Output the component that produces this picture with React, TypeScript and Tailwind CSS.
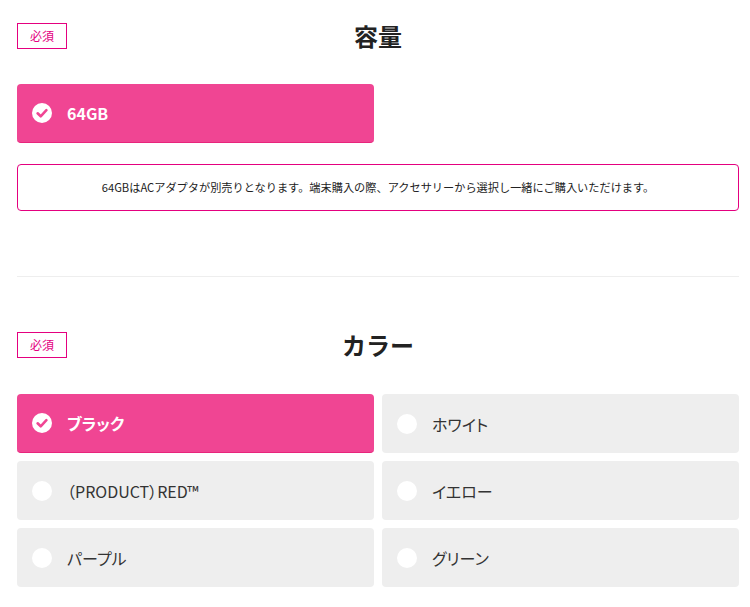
import { ReactNode } from "react";

const font = { fontFamily: '"Noto Sans CJK JP", "Noto Sans", sans-serif' };

function Badge() {
  return (
    <span className="absolute left-0 top-1/2 flex h-[26px] w-[50px] -translate-y-1/2 items-center justify-center border border-[#e4007f] text-[12px] leading-none text-[#e4007f]">
      必須
    </span>
  );
}

function Heading({ children }: { children: ReactNode }) {
  return (
    <div className="relative flex h-[26px] items-center justify-center">
      <Badge />
      <h2 className="text-[24px] font-bold leading-none text-[#222]">{children}</h2>
    </div>
  );
}

function CheckMark() {
  return (
    <svg width="20" height="20" viewBox="0 0 20 20" className="shrink-0">
      <circle cx="10" cy="10" r="10" fill="#fff" />
      <path d="M5.6 10.3 L8.7 13.3 L14.4 7.2" fill="none" stroke="#f04593" strokeWidth="2.6" strokeLinecap="round" strokeLinejoin="round" />
    </svg>
  );
}

function Option({ label, selected = false }: { label: string; selected?: boolean }) {
  return (
    <button
      className={
        selected
          ? "flex h-[59px] items-center gap-[15px] rounded-[4px] border-b border-[#e8247c] bg-[#f04593] pl-[15px] text-left text-[16px] font-bold text-white [font-feature-settings:'palt']"
          : "flex h-[59px] items-center gap-[15px] rounded-[4px] bg-[#eeeeee] pl-[15px] text-left text-[16px] text-[#333] [font-feature-settings:'palt']"
      }
    >
      {selected ? <CheckMark /> : <span className="h-[20px] w-[20px] shrink-0 rounded-full bg-white" />}
      <span>{label}</span>
    </button>
  );
}

export default function App() {
  const colors = ["ブラック", "ホワイト", "（PRODUCT）RED™", "イエロー", "パープル", "グリーン"];
  return (
    <div className="bg-white pl-[17px] pr-[11px] pt-[23px]" style={font}>
      <section>
        <Heading>容量</Heading>
        <div className="mt-[35px] grid grid-cols-2 gap-x-[8px]">
          <Option label="64GB" selected />
        </div>
        <div className="mt-[21px] flex h-[47px] items-center justify-center rounded-[4px] border border-[#e4007f] text-[11.2px] text-[#222]">
          64GBはACアダプタが別売りとなります。端末購入の際、アクセサリーから選択し一緒にご購入いただけます。
        </div>
      </section>
      <hr className="mt-[65px] border-t border-[#eeeeee]" />
      <section className="mt-[55px]">
        <Heading>カラー</Heading>
        <div className="mt-[36px] grid grid-cols-2 gap-[8px]">
          {colors.map((c, i) => (
            <Option key={c} label={c} selected={i === 0} />
          ))}
        </div>
      </section>
    </div>
  );
}
